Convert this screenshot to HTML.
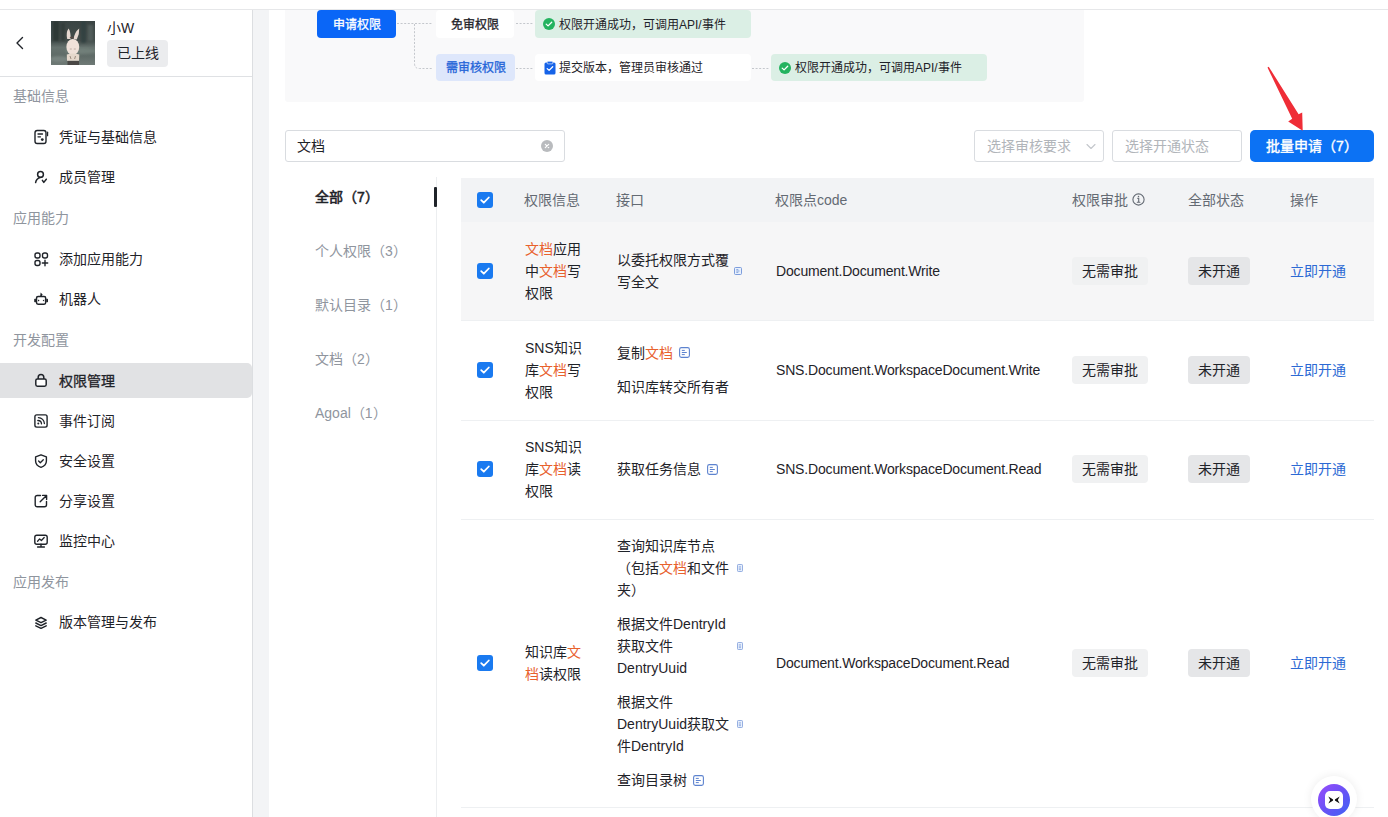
<!DOCTYPE html>
<html lang="zh-CN"><head><meta charset="utf-8">
<style>
*{box-sizing:border-box;margin:0;padding:0}
html,body{width:1388px;height:817px;overflow:hidden;background:#fff}
body{position:relative;font-family:"Liberation Sans",sans-serif;font-size:14px;color:#1f2329}
.a{position:absolute;white-space:nowrap}
.t{position:absolute;white-space:nowrap;line-height:22px;height:22px}
.topbar{position:absolute;left:0;top:0;width:1388px;height:10px;background:#fff;border-bottom:1px solid #e6e7e9;z-index:5}
.side{position:absolute;left:0;top:0;width:253px;height:817px;background:#fff;border-right:1px solid #dcdee1}
.strip{position:absolute;left:253px;top:0;width:16px;height:817px;background:#f3f4f6}
.sec{color:#8f959e}
.ico{position:absolute;left:33px;width:16px;height:16px}
.flow{position:absolute;left:285px;top:-20px;width:799px;height:122px;background:#f9f9fa;border-radius:3px}
.fb{position:absolute;height:28px;border-radius:4px;font-size:12px;line-height:30px;white-space:nowrap}
.dot{position:absolute;border-top:1px dotted #c2c5ca}
.dotv{position:absolute;border-left:1px dotted #c2c5ca}
.inp{position:absolute;border:1px solid #d9dce0;border-radius:3px;background:#fff}
.ph{color:#b1b5ba}
.th{color:#646a73}
.cb{position:absolute;width:16px;height:16px;border-radius:3px;background:#1a7af0}
.cb svg{position:absolute;left:0;top:0}
.hl{color:#e8612d}
.tag{position:absolute;height:28px;line-height:28px;border-radius:4px;padding:0 10px;white-space:nowrap}
.lnk{color:#2c69d4}
.md{-webkit-text-stroke:0.3px currentColor}
</style></head><body>

<div class="side">
  <svg class="a" style="left:14px;top:35px" width="12" height="16" viewBox="0 0 12 16"><path d="M8.5 2.5 L3 8 L8.5 13.5" fill="none" stroke="#1f2329" stroke-width="1.4" stroke-linecap="round" stroke-linejoin="round"/></svg>
  <div class="a" style="left:51px;top:21px;width:44px;height:44px;overflow:hidden;background:#4d5856">
    <svg width="44" height="44" viewBox="0 0 44 44">
      <defs>
        <linearGradient id="avbg" x1="0" y1="0" x2="0" y2="1"><stop offset="0" stop-color="#3a4443"/><stop offset="0.45" stop-color="#434d4b"/><stop offset="0.6" stop-color="#66726e"/><stop offset="0.8" stop-color="#5f6b67"/><stop offset="1" stop-color="#6f7a76"/></linearGradient>
        <filter id="avbl"><feGaussianBlur stdDeviation="1.2"/></filter>
        <filter id="avbl2"><feGaussianBlur stdDeviation="0.5"/></filter>
      </defs>
      <rect width="44" height="44" fill="url(#avbg)"/>
      <g filter="url(#avbl)" opacity="0.8">
        <rect x="2" y="0" width="6" height="20" fill="#2c3433"/>
        <rect x="10" y="2" width="4" height="18" fill="#313a38"/>
        <rect x="30" y="0" width="5" height="22" fill="#33403f"/>
        <rect x="37" y="4" width="5" height="16" fill="#56625f"/>
        <ellipse cx="30" cy="30" rx="16" ry="3" fill="#75837d"/>
        <ellipse cx="8" cy="38" rx="10" ry="3" fill="#7d8884"/>
      </g>
      <g filter="url(#avbl2)">
        <path d="M16.2 18 Q14.8 11 17.6 7.4 Q19.8 10.5 19.6 18 Z" fill="#e6d8d0"/>
        <path d="M22.6 18 Q23.5 11 28.2 7.4 Q28.6 12.5 25.8 18.5 Z" fill="#e6d8d0"/>
        <path d="M18.5 17 Q21.5 14 23 17.5" fill="#5a4a44"/>
        <ellipse cx="21.8" cy="26" rx="6.4" ry="8" fill="#efe1d9"/>
        <path d="M15.8 33.5 Q22 31.5 28.3 33.5 L28 39.8 L16 39.8 Z" fill="#e5d8cc"/>
        <path d="M19 35 L20 38 M24.5 35 L23.6 38" stroke="#8a7a6c" stroke-width="0.8"/>
        <rect x="16.5" y="40" width="11.5" height="4" fill="#4a4744"/>
        <path d="M18.8 28 h2 M22.8 28 h2" stroke="#b2a198" stroke-width="0.8"/>
      </g>
    </svg>
  </div>
  <div class="t" style="left:107px;top:17px">小W</div>
  <div class="a" style="left:107px;top:40px;width:61px;height:27px;border-radius:4px;background:#ebecee;line-height:27px;text-align:center;color:#1f2329">已上线</div>
  <div class="a" style="left:0;top:76px;width:252px;height:1px;background:#dfe1e4"></div>

  <div class="t sec" style="left:13px;top:85px">基础信息</div>
  <svg class="ico" style="top:129px" viewBox="0 0 16 16"><rect x="2" y="1.5" width="11" height="13" rx="2.2" fill="none" stroke="#1f2329" stroke-width="1.4"/><path d="M5 5h4.5M5 7.8h2.5" stroke="#1f2329" stroke-width="1.3" stroke-linecap="round"/><circle cx="9.3" cy="10.6" r="1.4" fill="#1f2329"/><path d="M14.6 3.2v3.5" stroke="#1f2329" stroke-width="1.2" stroke-linecap="round"/></svg>
  <div class="t" style="left:59px;top:126px">凭证与基础信息</div>
  <svg class="ico" style="top:169px" viewBox="0 0 16 16"><circle cx="7.5" cy="5.4" r="2.9" fill="none" stroke="#1f2329" stroke-width="1.5"/><path d="M2.6 13.6Q3.4 9.2 7.4 8.4" fill="none" stroke="#1f2329" stroke-width="1.5" stroke-linecap="round"/><path d="M9.4 11.3l1.4 2.1 2.5-3.2" fill="none" stroke="#1f2329" stroke-width="1.5" stroke-linecap="round" stroke-linejoin="round"/></svg>
  <div class="t" style="left:59px;top:166px">成员管理</div>

  <div class="t sec" style="left:13px;top:207px">应用能力</div>
  <svg class="ico" style="top:251px" viewBox="0 0 16 16"><rect x="2" y="2" width="5" height="5" rx="2" fill="none" stroke="#1f2329" stroke-width="1.4"/><rect x="9.5" y="2" width="5" height="5" rx="2" fill="none" stroke="#1f2329" stroke-width="1.4"/><rect x="2" y="9.5" width="5" height="5" rx="2" fill="none" stroke="#1f2329" stroke-width="1.4"/><path d="M12 9.3v5.4M9.3 12h5.4" stroke="#1f2329" stroke-width="1.4" stroke-linecap="round"/></svg>
  <div class="t" style="left:59px;top:248px">添加应用能力</div>
  <svg class="ico" style="top:291px" viewBox="0 0 16 16"><rect x="3.5" y="5.6" width="9.2" height="7.6" rx="1.6" fill="none" stroke="#1f2329" stroke-width="1.5"/><path d="M7.2 5.2 L7.6 1.4 L9.6 3.6 L8.6 5.2Z" fill="#1f2329"/><path d="M5 8.4 L6.6 9.4 L5 10.4Z M11.2 8.4 L9.6 9.4 L11.2 10.4Z" fill="#1f2329"/><rect x="1.2" y="7.8" width="1.8" height="3.4" rx="0.6" fill="#1f2329"/><rect x="13.2" y="7.8" width="1.8" height="3.4" rx="0.6" fill="#1f2329"/></svg>
  <div class="t" style="left:59px;top:288px">机器人</div>

  <div class="t sec" style="left:13px;top:329px">开发配置</div>
  <div class="a" style="left:0;top:363px;width:252px;height:35px;background:#e1e2e4;border-radius:0 5px 5px 0"></div>
  <svg class="ico" style="top:372.4px" viewBox="0 0 16 16"><rect x="2.8" y="7" width="10.4" height="7.2" rx="1.6" fill="#fff" stroke="#1f2329" stroke-width="1.5"/><path d="M5.2 7V5.2a2.8 2.8 0 0 1 5.6 0V7" fill="none" stroke="#1f2329" stroke-width="1.5"/></svg>
  <div class="t" style="left:59px;top:370px;-webkit-text-stroke:0.3px currentColor">权限管理</div>
  <svg class="ico" style="top:413px" viewBox="0 0 16 16"><rect x="1.9" y="1.9" width="12.2" height="12.2" rx="1.8" fill="none" stroke="#1f2329" stroke-width="1.4"/><path d="M5.4 4.6a6.2 6.2 0 0 1 6 6M4.8 7.5a3.6 3.6 0 0 1 3.7 3.4" fill="none" stroke="#1f2329" stroke-width="1.3" stroke-linecap="round"/><circle cx="5.3" cy="10.4" r="1" fill="#1f2329"/></svg>
  <div class="t" style="left:59px;top:410px">事件订阅</div>
  <svg class="ico" style="top:453px" viewBox="0 0 16 16"><path d="M8 1.8l5.4 2v4.3c0 3.2-2.4 5.3-5.4 6.2-3-0.9-5.4-3-5.4-6.2V3.8z" fill="none" stroke="#1f2329" stroke-width="1.4" stroke-linejoin="round"/><path d="M5.6 8l1.7 1.7 3-3" fill="none" stroke="#1f2329" stroke-width="1.3" stroke-linecap="round" stroke-linejoin="round"/></svg>
  <div class="t" style="left:59px;top:450px">安全设置</div>
  <svg class="ico" style="top:493px" viewBox="0 0 16 16"><path d="M7.5 2.5H4.2A2 2 0 0 0 2.2 4.5v7.3a2 2 0 0 0 2 2h7.3a2 2 0 0 0 2-2V8.5" fill="none" stroke="#1f2329" stroke-width="1.4" stroke-linecap="round"/><path d="M7.2 8.8l6.3-6.3M9.6 2.4h4v4" fill="none" stroke="#1f2329" stroke-width="1.4" stroke-linecap="round" stroke-linejoin="round"/></svg>
  <div class="t" style="left:59px;top:490px">分享设置</div>
  <svg class="ico" style="top:533px" viewBox="0 0 16 16"><rect x="1.8" y="2.2" width="12.4" height="9" rx="2" fill="none" stroke="#1f2329" stroke-width="1.4"/><path d="M4.6 8.2l2-2.3 1.8 1.6 2.8-3" fill="none" stroke="#1f2329" stroke-width="1.3" stroke-linecap="round" stroke-linejoin="round"/><path d="M8 11.2v2.6M4.6 14h6.8" stroke="#1f2329" stroke-width="1.4" stroke-linecap="round"/></svg>
  <div class="t" style="left:59px;top:530px">监控中心</div>

  <div class="t sec" style="left:13px;top:571px">应用发布</div>
  <svg class="ico" style="top:615px" viewBox="0 0 16 16"><path d="M8 2.5l5.2 2.6L8 7.7 2.8 5.1z" fill="none" stroke="#1f2329" stroke-width="1.4" stroke-linejoin="round"/><path d="M2.8 8l5.2 2.6L13.2 8M2.8 10.8l5.2 2.6 5.2-2.6" fill="none" stroke="#1f2329" stroke-width="1.4" stroke-linecap="round" stroke-linejoin="round"/></svg>
  <div class="t" style="left:59px;top:611px">版本管理与发布</div>
</div>
<div class="strip"></div>

<!-- flow -->
<div class="flow"></div>
<div class="fb" style="left:317px;top:10px;width:79px;background:#0a66f7;color:#fff;text-align:center;-webkit-text-stroke:0.3px currentColor">申请权限</div>
<svg class="a" style="left:390px;top:15px" width="390" height="60" viewBox="390 15 390 60"><g fill="none" stroke="#c4c7cc" stroke-width="1" stroke-dasharray="2 1.6">
<path d="M397 23.5H433"/><path d="M414.5 24V63.5Q414.5 68.5 419.5 68.5H433"/><path d="M516 23.5H534"/><path d="M516 68.5H534"/><path d="M752 68.5H770"/></g></svg>
<div class="fb" style="left:436px;top:10px;width:78px;background:#fff;text-align:center;-webkit-text-stroke:0.3px currentColor;color:#1f2329">免审权限</div>
<div class="fb" style="left:436px;top:54px;width:79px;height:27px;line-height:29px;background:#dee7fb;text-align:center;-webkit-text-stroke:0.3px currentColor;color:#2464d8">需审核权限</div>
<div class="fb" style="left:535px;top:10px;width:216px;background:#dbefe5;color:#1f2329">
  <svg class="a" style="left:8px;top:8px" width="12" height="12" viewBox="0 0 12 12"><circle cx="6" cy="6" r="6" fill="#23b35f"/><path d="M3.2 6.1l1.9 1.8 3.6-3.6" fill="none" stroke="#fff" stroke-width="1.3" stroke-linecap="round" stroke-linejoin="round"/></svg>
  <span class="a" style="left:24px;top:0">权限开通成功，可调用API/事件</span></div>
<div class="fb" style="left:535px;top:54px;width:216px;height:27px;line-height:29px;background:#fff;color:#1f2329">
  <svg class="a" style="left:9px;top:7px" width="12" height="14" viewBox="0 0 12 14"><rect x="0.5" y="1.5" width="11" height="12" rx="1.5" fill="#1663e8"/><rect x="3.2" y="0.3" width="5.6" height="2.6" rx="0.8" fill="#1663e8" stroke="#fff" stroke-width="0.6"/><path d="M3.2 7.6l1.9 1.8 3.6-3.6" fill="none" stroke="#fff" stroke-width="1.3" stroke-linecap="round" stroke-linejoin="round"/></svg>
  <span class="a" style="left:24px;top:0">提交版本，管理员审核通过</span></div>
<div class="fb" style="left:771px;top:54px;width:216px;height:27px;line-height:29px;background:#dbefe5;color:#1f2329">
  <svg class="a" style="left:8px;top:7.5px" width="12" height="12" viewBox="0 0 12 12"><circle cx="6" cy="6" r="6" fill="#23b35f"/><path d="M3.2 6.1l1.9 1.8 3.6-3.6" fill="none" stroke="#fff" stroke-width="1.3" stroke-linecap="round" stroke-linejoin="round"/></svg>
  <span class="a" style="left:24px;top:0">权限开通成功，可调用API/事件</span></div>

<!-- search & filters -->
<div class="inp" style="left:285px;top:130px;width:280px;height:32px">
  <div class="t" style="left:11px;top:4px">文档</div>
  <svg class="a" style="left:255px;top:9px" width="12" height="12" viewBox="0 0 12 12"><circle cx="6" cy="6" r="6" fill="#b9bbbe"/><path d="M4.3 4.3l3.4 3.4M7.7 4.3l-3.4 3.4" stroke="#fff" stroke-width="1.2" stroke-linecap="round"/></svg>
</div>
<div class="inp" style="left:974px;top:130px;width:130px;height:32px">
  <div class="t ph" style="left:12px;top:4px">选择审核要求</div>
  <svg class="a" style="left:110px;top:8.5px" width="12" height="12" viewBox="0 0 12 12"><path d="M2 4.5l4 4 4-4" fill="none" stroke="#c3c6cb" stroke-width="1.1" stroke-linecap="round" stroke-linejoin="round"/></svg>
</div>
<div class="inp" style="left:1112px;top:130px;width:130px;height:32px">
  <div class="t ph" style="left:12px;top:4px">选择开通状态</div>
</div>
<div class="a" style="left:1250px;top:130px;width:124px;height:32px;border-radius:5px;background:#0c72f4;color:#fff;-webkit-text-stroke:0.4px currentColor;line-height:32px;text-align:center">批量申请（7）</div>
<svg class="a" style="left:1260px;top:60px;z-index:6" width="50" height="75" viewBox="1260 60 50 75"><path d="M1267.5 67.6 L1268.7 66.8 L1298.6 114.2 L1302.2 112.4 L1302.7 130.8 L1288.2 121.5 L1292.2 118.8 Z" fill="#ef2d37"/></svg>

<!-- tabs -->
<div class="a" style="left:436px;top:177px;width:1px;height:640px;background:#eceef0"></div>
<div class="a" style="left:434px;top:187px;width:3px;height:20px;background:#1f2329;border-radius:1px"></div>
<div class="t" style="left:315px;top:186px;-webkit-text-stroke:0.55px currentColor">全部（7）</div>
<div class="t sec" style="left:315px;top:240px">个人权限（3）</div>
<div class="t sec" style="left:315px;top:294px">默认目录（1）</div>
<div class="t sec" style="left:315px;top:348px">文档（2）</div>
<div class="t sec" style="left:315px;top:402px">Agoal（1）</div>
<!-- table -->
<div class="a" style="left:461px;top:178px;width:913px;height:44px;background:#f2f3f5"></div>
<div class="cb" style="left:477px;top:192px"><svg width="16" height="16" viewBox="0 0 16 16"><path d="M4.2 8.2l2.6 2.5 5-5.2" fill="none" stroke="#fff" stroke-width="1.8" stroke-linecap="round" stroke-linejoin="round"/></svg></div>
<div class="t th" style="left:524px;top:189px">权限信息</div>
<div class="t th" style="left:616px;top:189px">接口</div>
<div class="t th" style="left:775px;top:189px">权限点code</div>
<div class="t th" style="left:1072px;top:189px">权限审批</div>
<div class="t th" style="left:1188px;top:189px">全部状态</div>
<div class="t th" style="left:1290px;top:189px">操作</div>
<svg class="a" style="left:1132px;top:193px" width="13" height="13" viewBox="0 0 13 13"><circle cx="6.5" cy="6.5" r="5.6" fill="none" stroke="#646a73" stroke-width="1.1"/><path d="M5.6 5.2h1.1v4M5.3 9.3h2.6" fill="none" stroke="#646a73" stroke-width="1.1" stroke-linecap="round"/><circle cx="6.5" cy="3.6" r="0.75" fill="#646a73"/></svg>
<div class="a" style="left:461px;top:222px;width:913px;height:98px;background:#f6f6f7"></div>
<div class="a" style="left:461px;top:320px;width:913px;height:1px;background:#eef0f2"></div>
<div class="cb" style="left:477px;top:263px"><svg width="16" height="16" viewBox="0 0 16 16"><path d="M4.2 8.2l2.6 2.5 5-5.2" fill="none" stroke="#fff" stroke-width="1.8" stroke-linecap="round" stroke-linejoin="round"/></svg></div>
<div class="a" style="left:525px;top:238px;line-height:22px;width:60px;white-space:normal"><span class="hl">文档</span>应用<br>中<span class="hl">文档</span>写<br>权限</div>
<div class="a" style="left:617px;top:249px;line-height:22px">以委托权限方式覆<br>写全文</div>
<svg class="a" style="left:734px;top:267px" width="8" height="8" viewBox="0 0 8 8"><rect x="0.5" y="0.5" width="7" height="7" rx="1" fill="#e8f0fc" stroke="#6f93d8" stroke-width="0.9"/><path d="M2.3 2.6h2M2.3 4h3.2M2.3 5.4h2" stroke="#6f93d8" stroke-width="0.8"/></svg>
<div class="t" style="left:776px;top:260px;letter-spacing:-0.17px">Document.Document.Write</div>
<div class="tag" style="left:1072px;top:257px;background:#f0f1f2">无需审批</div><div class="tag" style="left:1188px;top:257px;background:#e5e6e8">未开通</div><div class="t lnk" style="left:1290px;top:260px">立即开通</div>
<div class="a" style="left:461px;top:420px;width:913px;height:1px;background:#eef0f2"></div>
<div class="cb" style="left:477px;top:362px"><svg width="16" height="16" viewBox="0 0 16 16"><path d="M4.2 8.2l2.6 2.5 5-5.2" fill="none" stroke="#fff" stroke-width="1.8" stroke-linecap="round" stroke-linejoin="round"/></svg></div>
<div class="a" style="left:525px;top:337px;line-height:22px">SNS知识<br>库<span class="hl">文档</span>写<br>权限</div>
<div class="t" style="left:617px;top:342px">复制<span class="hl">文档</span></div>
<svg class="a" style="left:679px;top:347px" width="11" height="11" viewBox="0 0 11 11"><rect x="0.6" y="0.6" width="9.8" height="9.8" rx="1.8" fill="none" stroke="#5d83cf" stroke-width="1.1"/><path d="M3.2 3.4h2.2M3.2 5.5h4.2M3.2 7.6h2.2" stroke="#5d83cf" stroke-width="1" stroke-linecap="round"/></svg>
<div class="t" style="left:617px;top:376px">知识库转交所有者</div>
<div class="t" style="left:776px;top:359px;letter-spacing:-0.17px">SNS.Document.WorkspaceDocument.Write</div>
<div class="tag" style="left:1072px;top:356px;background:#f0f1f2">无需审批</div><div class="tag" style="left:1188px;top:356px;background:#e5e6e8">未开通</div><div class="t lnk" style="left:1290px;top:359px">立即开通</div>
<div class="a" style="left:461px;top:519px;width:913px;height:1px;background:#eef0f2"></div>
<div class="cb" style="left:477px;top:461px"><svg width="16" height="16" viewBox="0 0 16 16"><path d="M4.2 8.2l2.6 2.5 5-5.2" fill="none" stroke="#fff" stroke-width="1.8" stroke-linecap="round" stroke-linejoin="round"/></svg></div>
<div class="a" style="left:525px;top:436px;line-height:22px">SNS知识<br>库<span class="hl">文档</span>读<br>权限</div>
<div class="t" style="left:617px;top:458px">获取任务信息</div>
<svg class="a" style="left:707px;top:464px" width="11" height="11" viewBox="0 0 11 11"><rect x="0.6" y="0.6" width="9.8" height="9.8" rx="1.8" fill="none" stroke="#5d83cf" stroke-width="1.1"/><path d="M3.2 3.4h2.2M3.2 5.5h4.2M3.2 7.6h2.2" stroke="#5d83cf" stroke-width="1" stroke-linecap="round"/></svg>
<div class="t" style="left:776px;top:458px;letter-spacing:-0.17px">SNS.Document.WorkspaceDocument.Read</div>
<div class="tag" style="left:1072px;top:455px;background:#f0f1f2">无需审批</div><div class="tag" style="left:1188px;top:455px;background:#e5e6e8">未开通</div><div class="t lnk" style="left:1290px;top:458px">立即开通</div>
<div class="a" style="left:461px;top:807px;width:913px;height:1px;background:#eef0f2"></div>
<div class="cb" style="left:477px;top:655px"><svg width="16" height="16" viewBox="0 0 16 16"><path d="M4.2 8.2l2.6 2.5 5-5.2" fill="none" stroke="#fff" stroke-width="1.8" stroke-linecap="round" stroke-linejoin="round"/></svg></div>
<div class="a" style="left:525px;top:641px;line-height:22px">知识库<span class="hl">文</span><br><span class="hl">档</span>读权限</div>
<div class="a" style="left:617px;top:535px;line-height:22px">查询知识库节点<br>（包括<span class="hl">文档</span>和文件<br>夹）</div>
<svg class="a" style="left:737px;top:564px" width="6" height="8" viewBox="0 0 6 8"><rect x="0.5" y="0.5" width="5" height="7" rx="0.8" fill="#e8f0fc" stroke="#7d9cdb" stroke-width="0.8"/><path d="M1.8 2.8h2.2M1.8 4.2h2.2M1.8 5.6h2.2" stroke="#7d9cdb" stroke-width="0.7"/></svg>
<div class="a" style="left:617px;top:613px;line-height:22px">根据文件DentryId<br>获取文件<br>DentryUuid</div>
<svg class="a" style="left:737px;top:642px" width="6" height="8" viewBox="0 0 6 8"><rect x="0.5" y="0.5" width="5" height="7" rx="0.8" fill="#e8f0fc" stroke="#7d9cdb" stroke-width="0.8"/><path d="M1.8 2.8h2.2M1.8 4.2h2.2M1.8 5.6h2.2" stroke="#7d9cdb" stroke-width="0.7"/></svg>
<div class="a" style="left:617px;top:691px;line-height:22px">根据文件<br>DentryUuid获取文<br>件DentryId</div>
<svg class="a" style="left:737px;top:720px" width="6" height="8" viewBox="0 0 6 8"><rect x="0.5" y="0.5" width="5" height="7" rx="0.8" fill="#e8f0fc" stroke="#7d9cdb" stroke-width="0.8"/><path d="M1.8 2.8h2.2M1.8 4.2h2.2M1.8 5.6h2.2" stroke="#7d9cdb" stroke-width="0.7"/></svg>
<div class="t" style="left:617px;top:769px">查询目录树</div>
<svg class="a" style="left:693px;top:775px" width="11" height="11" viewBox="0 0 11 11"><rect x="0.6" y="0.6" width="9.8" height="9.8" rx="1.8" fill="none" stroke="#5d83cf" stroke-width="1.1"/><path d="M3.2 3.4h2.2M3.2 5.5h4.2M3.2 7.6h2.2" stroke="#5d83cf" stroke-width="1" stroke-linecap="round"/></svg>
<div class="t" style="left:776px;top:652px;letter-spacing:-0.17px">Document.WorkspaceDocument.Read</div>
<div class="tag" style="left:1072px;top:649px;background:#f0f1f2">无需审批</div><div class="tag" style="left:1188px;top:649px;background:#e5e6e8">未开通</div><div class="t lnk" style="left:1290px;top:652px">立即开通</div>
<!-- floating button -->
<div class="a" style="left:1311px;top:776px;width:46px;height:46px;border-radius:50%;background:#fff;box-shadow:0 0 10px rgba(0,0,0,0.08);z-index:4"></div>
<div class="a" style="left:1318px;top:784px;width:32px;height:32px;border-radius:50%;background:linear-gradient(135deg,#9a4dfb 0%,#6a52f6 50%,#3d63f4 100%);z-index:4"></div>
<div class="a" style="left:1325px;top:791px;width:18px;height:18px;border-radius:5px;background:#fff;z-index:4">
<svg class="a" style="left:3px;top:5px" width="12" height="8" viewBox="0 0 12 8"><path d="M0.3 0.6 L4.8 3.2 Q5.6 4 4.8 4.8 L0.3 7.4 L2.2 4 Z" fill="#111"/><path d="M11.7 0.6 L7.2 3.2 Q6.4 4 7.2 4.8 L11.7 7.4 L9.8 4 Z" fill="#111"/></svg>
</div>
<div class="topbar"></div>

</body></html>
